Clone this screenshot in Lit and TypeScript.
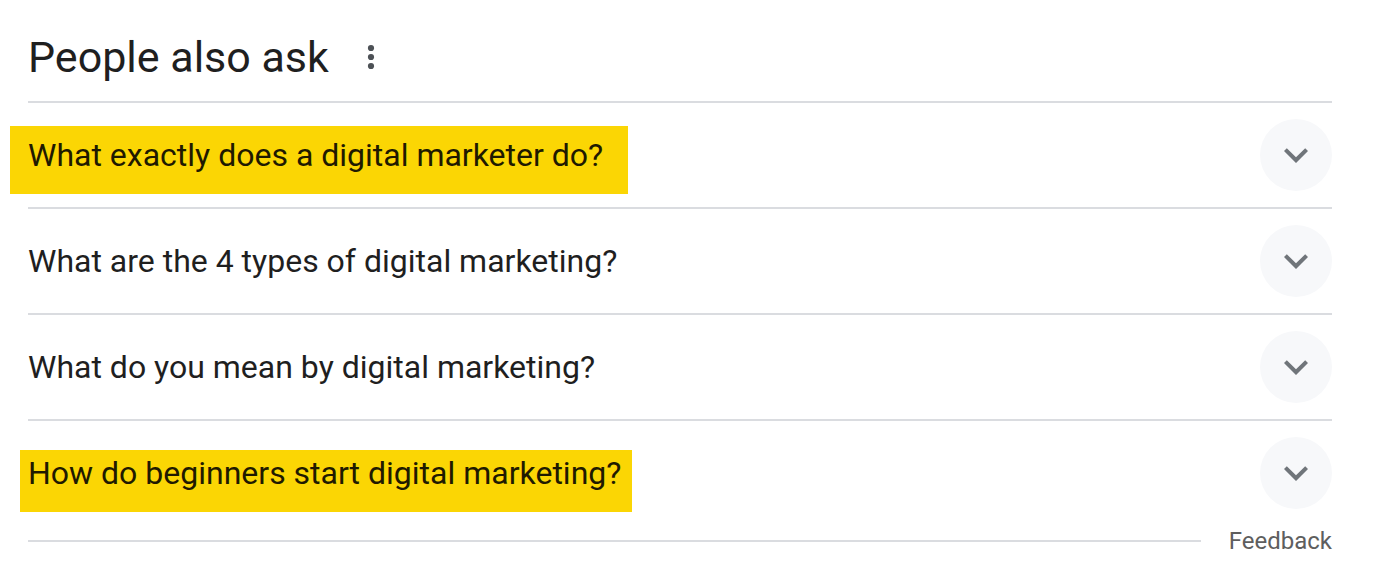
import { LitElement, html, css } from "lit";
import { customElement, property } from "lit/decorators.js";

interface Question {
  text: string;
  mark?: "wide" | "snug";
}

const questions: Question[] = [
  { text: "What exactly does a digital marketer do?", mark: "wide" },
  { text: "What are the 4 types of digital marketing?" },
  { text: "What do you mean by digital marketing?" },
  { text: "How do beginners start digital marketing?", mark: "snug" },
];

@customElement("question-row")
export class QuestionRow extends LitElement {
  @property({ attribute: false }) question: Question = { text: "" };
  @property({ type: Boolean, reflect: true }) open = false;

  static styles = css`
    :host {
      display: block;
      border-top: 2px solid #dadce0;
    }
    .row {
      display: flex;
      align-items: center;
      justify-content: space-between;
      gap: 32px;
      width: 100%;
      padding: 16px 0;
      border: 0;
      background: none;
      color: #1f1f1f;
      font: 400 32px/40px Roboto, "Liberation Sans", sans-serif;
      text-align: left;
      cursor: pointer;
    }
    .marked {
      background: #fbd604;
      color: #1f1a00;
    }
    .wide {
      margin: -9px -25px -19px -18px;
      padding: 9px 25px 19px 18px;
    }
    .snug {
      margin: -3px -11px -19px -8px;
      padding: 3px 11px 19px 8px;
    }
    .disc {
      display: flex;
      flex: none;
      align-items: center;
      justify-content: center;
      width: 72px;
      height: 72px;
      border-radius: 50%;
      background: #f7f8fa;
    }
    .chevron {
      width: 48px;
      height: 48px;
      fill: #70757a;
    }
    :host([open]) .chevron {
      transform: rotate(180deg);
    }
  `;

  render() {
    const { text, mark } = this.question;
    return html`
      <button
        class="row"
        aria-expanded=${this.open ? "true" : "false"}
        @click=${() => (this.open = !this.open)}
      >
        <span class=${mark ? `marked ${mark}` : "plain"}>${text}</span>
        <span class="disc">
          <svg class="chevron" viewBox="0 0 24 24" aria-hidden="true">
            <path d="M16.59 8.59 12 13.17 7.41 8.59 6 10l6 6 6-6z" />
          </svg>
        </span>
      </button>
    `;
  }
}

@customElement("app-root")
export class AppRoot extends LitElement {
  static styles = css`
    :host {
      display: block;
      padding: 32px 52px 11px 28px;
      background: #fff;
      color: #1f1f1f;
      font-family: Roboto, "Liberation Sans", sans-serif;
    }
    .head {
      display: flex;
      align-items: center;
      gap: 18px;
      padding-bottom: 19px;
    }
    .title {
      margin: 0;
      font-size: 43px;
      font-weight: 400;
      line-height: 50px;
    }
    .more {
      display: flex;
      padding: 0;
      border: 0;
      background: none;
      cursor: pointer;
    }
    .dots {
      width: 48px;
      height: 48px;
      fill: #4d5156;
    }
    .foot {
      display: flex;
      align-items: center;
      gap: 28px;
    }
    .rule {
      flex: 1;
      height: 2px;
      margin: 0;
      border: 0;
      background: #dadce0;
    }
    .feedback {
      color: #5e5e5e;
      font-size: 24px;
      line-height: 32px;
      text-decoration: none;
    }
  `;

  render() {
    return html`
      <header class="head">
        <h1 class="title">People also ask</h1>
        <button class="more" aria-label="About this result">
          <svg class="dots" viewBox="0 0 48 48" aria-hidden="true">
            <circle cx="24" cy="15" r="3.1" />
            <circle cx="24" cy="24" r="3.1" />
            <circle cx="24" cy="33" r="3.1" />
          </svg>
        </button>
      </header>
      <main>
        ${questions.map((q) => html`<question-row .question=${q}></question-row>`)}
      </main>
      <footer class="foot">
        <hr class="rule" />
        <a class="feedback" href="#feedback">Feedback</a>
      </footer>
    `;
  }
}
